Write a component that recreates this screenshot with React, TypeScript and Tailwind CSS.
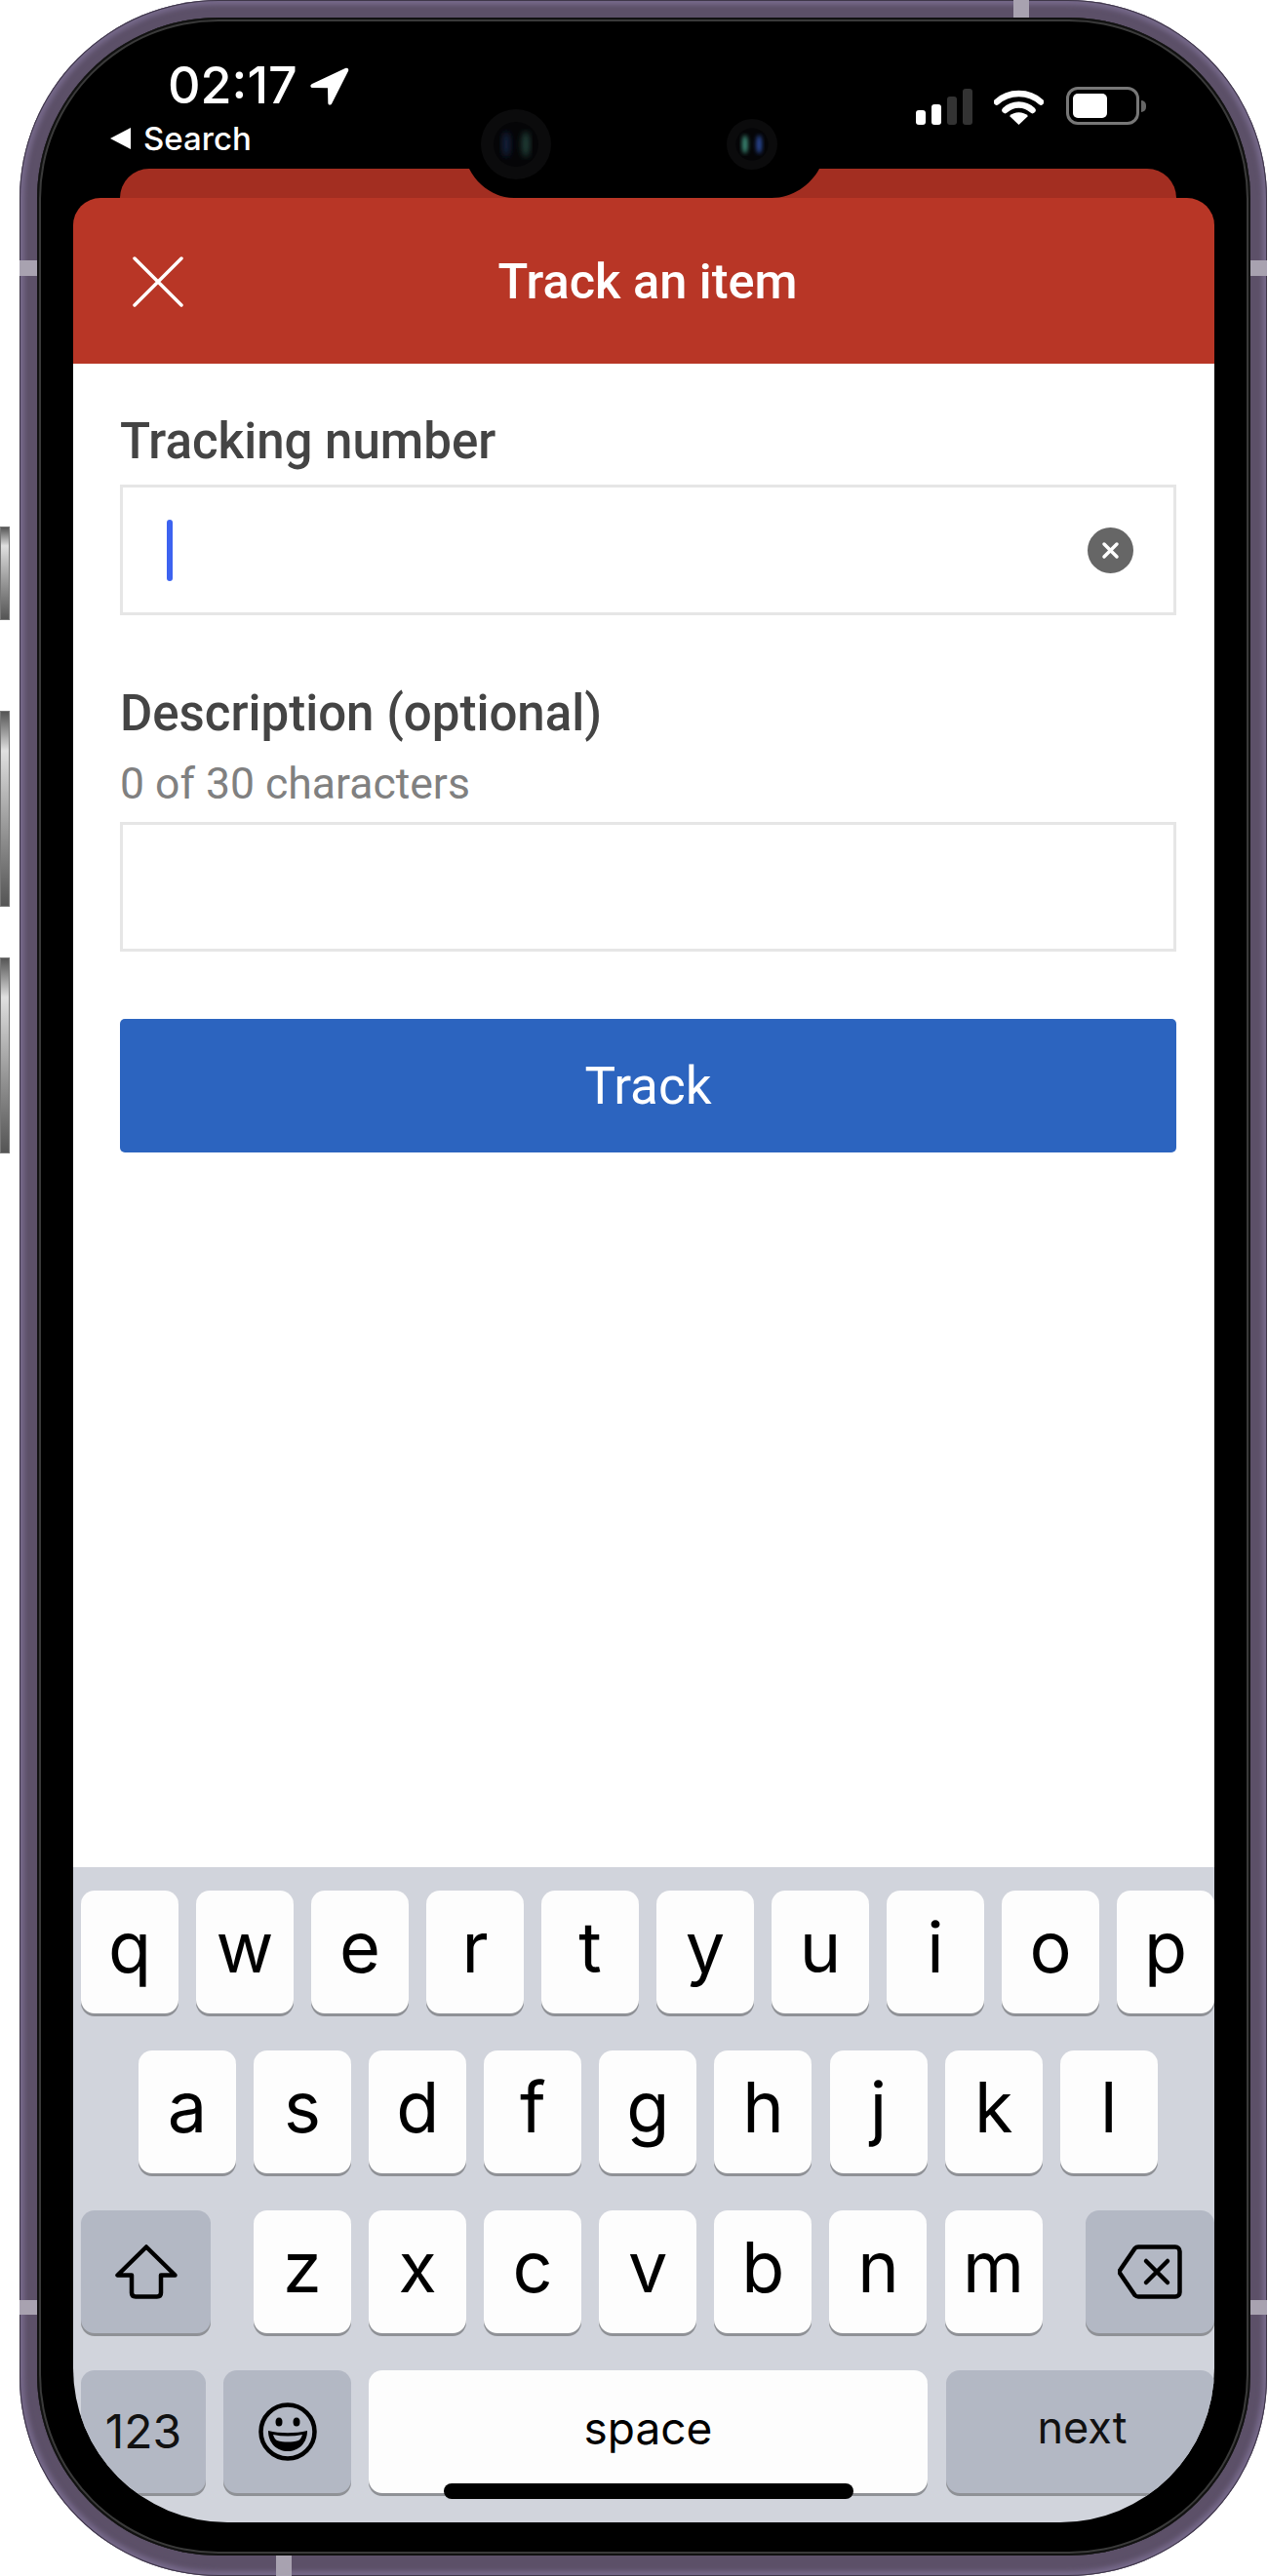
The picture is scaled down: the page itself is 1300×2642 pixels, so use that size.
const ROW_1 = ['q', 'w', 'e', 'r', 't', 'y', 'u', 'i', 'o', 'p']
const ROW_2 = ['a', 's', 'd', 'f', 'g', 'h', 'j', 'k', 'l']
const ROW_3 = ['z', 'x', 'c', 'v', 'b', 'n', 'm']

function Key({ label }: { label: string }) {
  return (
    <div className="flex h-[126px] w-[100px] items-center justify-center rounded-[14px] bg-[#fdfdfd] pb-[10px] text-[72px] leading-none font-normal text-black shadow-[0_3px_0_#8f9196]">
      {label}
    </div>
  )
}

function Camera({ size, big }: { size: number; big?: boolean }) {
  return (
    <svg width={size} height={size} viewBox="0 0 72 72">
      <defs>
        <filter id={big ? 'blur-a' : 'blur-b'}>
          <feGaussianBlur stdDeviation="3" />
        </filter>
      </defs>
      <circle cx="36" cy="36" r="36" fill="#0b0b0c" />
      <circle cx="36" cy="36" r="23" fill="#050507" />
      <g filter={big ? 'url(#blur-a)' : 'url(#blur-b)'}>
        <ellipse cx={big ? 26 : 46} cy="36" rx="4" ry="13" fill={big ? '#16213f' : '#2a4a9a'} />
        <ellipse cx={big ? 46 : 26} cy="36" rx="4" ry="13" fill={big ? '#24423b' : '#3d8c78'} />
      </g>
    </svg>
  )
}

function StatusBar() {
  return (
    <div className="flex h-[155px] justify-between text-white">
      <div className="pl-[38px]">
        <div className="mt-[40px] flex items-center pl-[59px]">
          <span className="text-[52px] leading-[60px] font-medium">02:17</span>
          <svg className="ml-[12px]" width="41" height="39" viewBox="0 0 41 39">
            <path
              d="M37 1 3 17c-2.500 1.200-2 4 .8 4l15.200.2.300 15.200c.1 2.600 3 3 4 .6L40 4c1-2.400-.7-4-3-3z"
              fill="#fff"
            />
          </svg>
        </div>
        <div className="mt-[4px] flex items-center gap-[13px]">
          <svg width="21" height="22" viewBox="0 0 21 22">
            <path d="M21 0v22L0 11z" fill="#fff" />
          </svg>
          <span className="text-[33px] leading-[40px] font-medium">Search</span>
        </div>
      </div>
      <div className="mt-[70px] flex h-[40px] items-end pr-[70px]">
        <div className="flex items-end gap-[6px]">
          <div className="h-[15px] w-[10px] rounded-[3px] bg-white" />
          <div className="h-[21px] w-[10px] rounded-[3px] bg-white" />
          <div className="h-[29px] w-[10px] rounded-[3px] bg-[#333]" />
          <div className="h-[37px] w-[10px] rounded-[3px] bg-[#333]" />
        </div>
        <svg className="ml-[22px]" width="51" height="37" viewBox="0 0 51 37" fill="none">
          <path d="M3 13.500C15 2 36 2 48 13.500" stroke="#fff" strokeWidth="6.500" strokeLinecap="round" />
          <path d="M11.500 22C19 14.500 32 14.500 39.500 22" stroke="#fff" strokeWidth="6.500" strokeLinecap="round" />
          <path d="M25.500 37 16 28c5-5 14-5 19 0z" fill="#fff" />
        </svg>
        <div className="ml-[23px] flex items-center">
          <div className="h-[39px] w-[75px] rounded-[12px] border-[3px] border-[#777] p-[4px]">
            <div className="h-full w-[35px] rounded-[5px] bg-white" />
          </div>
          <div className="ml-[2px] h-[12px] w-[5px] rounded-r-full bg-[#666]" />
        </div>
      </div>
    </div>
  )
}

function Form() {
  return (
    <div className="flex-1 bg-white pr-[39px] pl-[48px] font-['Roboto',sans-serif]">
      <div className="mt-[53px] text-[51px] leading-[54px] font-medium text-[#444]">Tracking number</div>
      <div className="mt-[17px] flex h-[134px] items-center justify-between border-[3px] border-[#e6e6e6] pr-[41px] pl-[45px]">
        <div className="h-[63px] w-[6px] rounded-full bg-[#3d63f0]" />
        <div className="flex h-[47px] w-[47px] items-center justify-center rounded-full bg-[#666]">
          <svg width="19" height="19" viewBox="0 0 19 19">
            <path d="M3 3l13 13M16 3 3 16" stroke="#fff" strokeWidth="3.500" strokeLinecap="round" />
          </svg>
        </div>
      </div>
      <div className="mt-[74px] text-[51px] leading-[54px] font-medium text-[#444]">Description (optional)</div>
      <div className="mt-[22px] text-[44.500px] leading-[46px] text-[#808080]">0 of 30 characters</div>
      <div className="mt-[16px] h-[133px] border-[3px] border-[#e6e6e6]" />
      <div className="mt-[69px] flex h-[137px] items-center justify-center rounded-[5px] bg-[#2c64bf] pt-[3px] text-[53px] text-white">
        Track
      </div>
    </div>
  )
}

function Keyboard() {
  return (
    <div className="relative flex h-[672px] flex-col gap-[38px] bg-[#d1d4dc] pt-[24px] font-['Inter',sans-serif]">
      <div className="flex gap-[18.100px] pl-[8px]">
        {ROW_1.map(k => <Key key={k} label={k} />)}
      </div>
      <div className="flex gap-[18.100px] pl-[67px]">
        {ROW_2.map(k => <Key key={k} label={k} />)}
      </div>
      <div className="flex pl-[8px]">
        <div className="flex h-[126px] w-[133px] items-center justify-center rounded-[14px] bg-[#b3b8c4] shadow-[0_3px_0_#8f9196]">
          <svg width="64" height="56" viewBox="0 0 64 56" fill="none">
            <path
              d="M32 2.500 2.500 31.500h14.500v18c0 2.500 1.500 4 4 4h22c2.500 0 4-1.500 4-4v-18h14.500z"
              stroke="#000"
              strokeWidth="4.500"
              strokeLinejoin="round"
            />
          </svg>
        </div>
        <div className="ml-[44px] flex gap-[18.100px]">
          {ROW_3.map(k => <Key key={k} label={k} />)}
        </div>
        <div className="ml-[44px] flex h-[126px] w-[132px] items-center justify-center rounded-[14px] bg-[#b3b8c4] shadow-[0_3px_0_#8f9196]">
          <svg width="66" height="56" viewBox="0 0 66 56" fill="none">
            <path
              d="M21 2.500h38c2.500 0 4.500 2 4.500 4.500v42c0 2.500-2 4.500-4.500 4.500H21c-1.500 0-2.500-.5-3.500-1.500L2.500 30c-1-1.300-1-2.700 0-4L17.500 4c1-1 2-1.500 3.500-1.500z"
              stroke="#000"
              strokeWidth="4.500"
              strokeLinejoin="round"
            />
            <path d="M29 17l22 22M51 17 29 39" stroke="#000" strokeWidth="4.500" strokeLinecap="round" />
          </svg>
        </div>
      </div>
      <div className="flex gap-[18px] pl-[8px]">
        <div className="flex h-[126px] w-[128px] items-center justify-center rounded-[14px] bg-[#b3b8c4] text-[48px] text-[#111] shadow-[0_3px_0_#8f9196]">
          123
        </div>
        <div className="flex h-[126px] w-[131px] items-center justify-center rounded-[14px] bg-[#b3b8c4] shadow-[0_3px_0_#8f9196]">
          <svg width="60" height="60" viewBox="0 0 60 60" fill="none">
            <circle cx="30" cy="30" r="27.500" stroke="#000" strokeWidth="4.500" />
            <ellipse cx="21" cy="20" rx="3.500" ry="4.500" fill="#000" />
            <ellipse cx="39" cy="20" rx="3.500" ry="4.500" fill="#000" />
            <path d="M10 29c12 3 28 3 40 0 0 13-9 21-20 21s-20-8-20-21z" fill="#000" />
            <path d="M15 33c10 2 20 2 30 0-1 3-2 5-4 6-7 2-15 2-22 0-2-1-3-3-4-6z" fill="#b3b8c4" />
          </svg>
        </div>
        <div className="flex h-[126px] w-[573px] items-center justify-center rounded-[14px] bg-[#fdfdfd] pb-[8px] text-[46px] text-black shadow-[0_3px_0_#8f9196]">
          space
        </div>
        <div className="ml-[1px] flex h-[126px] w-[275px] items-center justify-center rounded-[14px] bg-[#b3b8c4] pb-[8px] pl-[4px] text-[45px] text-[#111] shadow-[0_3px_0_#8f9196]">
          next
        </div>
      </div>
      <div className="absolute bottom-[24px] left-[380px] h-[16px] w-[420px] rounded-full bg-black" />
    </div>
  )
}

export default function App() {
  return (
    <div className="relative h-[2642px] w-[1300px] overflow-hidden bg-white pl-[20px] font-['Inter',sans-serif]">
      {/* side buttons */}
      <div className="absolute top-[540px] left-0 h-[96px] w-[10px] border border-[#777] bg-gradient-to-b from-[#555] via-[#e0e0e0] via-20% to-[#555]" />
      <div className="absolute top-[729px] left-0 h-[201px] w-[10px] border border-[#777] bg-gradient-to-b from-[#555] via-[#e0e0e0] via-20% to-[#555]" />
      <div className="absolute top-[982px] left-0 h-[201px] w-[10px] border border-[#777] bg-gradient-to-b from-[#555] via-[#e0e0e0] via-20% to-[#555]" />

      <div className="relative h-[2642px] w-[1279px] rounded-[204px] bg-[#5c5068] pt-[18px] pr-[17px] pb-[21px] pl-[18px] shadow-[inset_0_0_0_1px_#3e3648,inset_0_0_5px_5px_#76698a]">
        {/* antenna bands */}
        <div className="absolute top-[267px] left-0 h-[16px] w-[18px] bg-[#a8a2b0]" />
        <div className="absolute top-[267px] right-0 h-[16px] w-[17px] bg-[#a8a2b0]" />
        <div className="absolute top-[2359px] left-0 h-[15px] w-[18px] bg-[#a8a2b0]" />
        <div className="absolute top-[2359px] right-0 h-[15px] w-[17px] bg-[#a8a2b0]" />
        <div className="absolute top-0 left-[1019px] h-[18px] w-[16px] bg-[#a8a2b0]" />
        <div className="absolute bottom-0 left-[263px] h-[21px] w-[16px] bg-[#a8a2b0]" />

        <div className="h-full rounded-[186px] bg-black px-[37px] pb-[34px] shadow-[inset_0_0_0_2px_#111,inset_0_0_0_4px_#3a3a3a]">
          <div className="relative flex h-full flex-col overflow-hidden rounded-b-[158px]">
            <StatusBar />
            <div className="mr-[39px] ml-[48px] h-[30px] rounded-t-[30px] bg-[#a32e21]" />
            <div className="flex h-[170px] items-center justify-center rounded-t-[28px] bg-[#b83626] pt-[2px] pl-[8px] font-['Roboto',sans-serif] text-[50.500px] font-medium text-white">
              <svg className="absolute left-[61px]" width="52" height="52" viewBox="0 0 52 52">
                <path d="M2 2l48 48M50 2 2 50" stroke="#fff" strokeWidth="3.500" strokeLinecap="round" />
              </svg>
              Track an item
            </div>
            <Form />
            <Keyboard />

            {/* notch and cameras lie over the sheets */}
            <svg className="absolute top-[155px] left-[406px]" width="359" height="30" viewBox="0 0 359 30">
              <path d="M0 0C9 18 27 30 46 30H310C331 30 350 17 359 0Z" fill="#000" />
            </svg>
            <div className="absolute top-[94px] left-[418px]">
              <Camera size={72} big />
            </div>
            <div className="absolute top-[104px] left-[670px]">
              <Camera size={52} />
            </div>
          </div>
        </div>
      </div>
    </div>
  )
}
